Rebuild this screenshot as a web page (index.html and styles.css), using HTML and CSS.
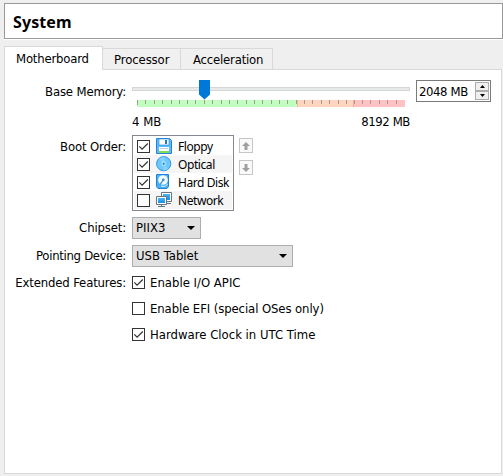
FILE: index.html
```html
<!DOCTYPE html>
<html lang="en">
<head>
<meta charset="utf-8">
<title>System</title>
<link rel="stylesheet" href="styles.css">
</head>
<body>
<svg class="defs" width="0" height="0">
  <defs>
    <linearGradient id="blue" x1="0" y1="0" x2="0" y2="1"><stop offset="0" stop-color="#48b4f5"/><stop offset="1" stop-color="#1490ea"/></linearGradient>
    <symbol id="tick" viewBox="0 0 13 13"><path d="M2.3 6.4 5.1 9.2 10.8 3.5" fill="none" stroke="#333" stroke-width="1.2"/></symbol>
  </defs>
</svg>
<header class="title"><h1>System</h1></header>
<nav class="tabs">
  <div class="tab active">Motherboard</div>
  <div class="tab proc">Processor</div>
  <div class="tab accel">Acceleration</div>
</nav>
<main class="panel">
  <section class="row memory">
    <label class="name">Base Memory:</label>
    <div class="slider">
      <div class="track"><div class="groove"></div>
        <svg class="handle" width="11" height="20" viewBox="0 0 11 20"><path d="M0 0H11V14.5L5.5 19.5 0 14.5Z" fill="#0078d7"/></svg>
      </div>
      <svg class="scale" width="268" height="7" viewBox="0 0 268 7" shape-rendering="crispEdges">
        <path d="M0 0H160V7H0Z" fill="#c1ffc1"/><path d="M160 0H216V7H160Z" fill="#ffd5c0"/><path d="M216 0H268V7H216Z" fill="#ffc1c1"/>
        <path d="M160.5 0V7" stroke="#dfc598"/><path d="M216.5 0V7" stroke="#f0aaa0"/>
        <path d="M.5 0v5M8.5 0v4M17.5 0v4M25.5 0v4M34.5 0v4M42.5 0v4M50.5 0v4M58.5 0v4M67.5 0v4M75.5 0v4M84.5 0v4M92.5 0v4M100.5 0v4M109.5 0v4M117.5 0v4M125.5 0v4M134.5 0v4M142.5 0v4M150.5 0v4M159.5 0v4M167.5 0v4M175.5 0v4M184.5 0v4M192.5 0v4M201.5 0v4M209.5 0v4M217.5 0v4M225.5 0v4M233.5 0v4M242.5 0v4M250.5 0v4M259.5 0v4" stroke="#a09c92"/>
      </svg>
      <div class="limits"><span>4 MB</span><span class="tight">8192 MB</span></div>
    </div>
    <div class="spin"><span class="tight">2048 MB</span>
      <div class="steps">
        <i><svg width="5" height="3"><path d="M0 3 2.5 0 5 3Z"/></svg></i>
        <i><svg width="5" height="3"><path d="M0 0H5L2.5 3Z"/></svg></i>
      </div>
    </div>
  </section>
  <section class="row boot">
    <label class="name">Boot Order:</label>
    <ul class="list">
      <li><span class="check"><svg><use href="#tick"/></svg></span>
        <svg class="icon" viewBox="0 0 16 16"><path d="M.5.5H13.5L15.5 2.5V15.5H.5Z" fill="#5cbcfa" stroke="#2385dc"/><path d="M3 1H13V7H3Z" fill="#fff" stroke="#2385dc" stroke-width=".6"/><path d="M9 2h2v4H9Z" fill="#2678be"/><path d="M3 9H13V15H3Z" fill="#fff"/><path d="M4 10.5H12" stroke="#c5d1d9"/><path d="M3 13H13V15H3Z" fill="#86dc4a"/></svg>
        <span>Floppy</span></li>
      <li><span class="check"><svg><use href="#tick"/></svg></span>
        <svg class="icon" viewBox="0 0 16 16"><circle cx="7.7" cy="7.7" r="7.1" fill="#6cc8fb" stroke="#2e93e4"/><path d="M8 8 3 2.5A7 7 0 0 1 9 1ZM8 8 12.5 13A7 7 0 0 1 7 14.500Z" fill="#a3e6ff" opacity=".4"/><circle cx="7.7" cy="7.7" r="2.4" fill="#a6e2fd"/><circle cx="7.7" cy="7.7" r="1" fill="#176fae"/></svg>
        <span>Optical</span></li>
      <li><span class="check"><svg><use href="#tick"/></svg></span>
        <svg class="icon" viewBox="0 0 16 16"><path d="M.5.5H12.5V12.5L11 14.5H2L.5 12.5Z" fill="#4ab0f6" stroke="#1f82d8"/><circle cx="7" cy="6" r="4.8" fill="#f0faff"/><circle cx="7.3" cy="5.7" r="1.3" fill="#3a86c0"/><path d="M7 6.500 4 10.500" stroke="#2f7fbd" stroke-width="1.2"/><path d="M5 12Q9.500 13.500 11.500 10" fill="none" stroke="#d5f0ff"/></svg>
        <span>Hard Disk</span></li>
      <li><span class="check"></span>
        <svg class="icon" viewBox="0 0 16 16"><path d="M5.5.5H15.5V9.500H5.5Z" fill="#fff" stroke="#68757e"/><path d="M7 2H14V8H7Z" fill="url(#blue)"/><path d="M11 11.500H15" fill="none" stroke="#68757e"/><path d="M.5 4.5H10.5V12.5H.5Z" fill="#fff" stroke="#68757e"/><path d="M2 6H9V11H2Z" fill="url(#blue)"/><path d="M5.5 13V14M2 14.5H9" stroke="#68757e"/></svg>
        <span>Network</span></li>
    </ul>
    <div class="moves">
      <i><svg width="8" height="8"><path d="M4 0 8 4H5.5V8H2.5V4H0Z"/></svg></i>
      <i><svg width="8" height="8"><path d="M4 8 8 4H5.5V0H2.5V4H0Z"/></svg></i>
    </div>
  </section>
  <section class="row combo-row">
    <label class="name">Chipset:</label>
    <div class="combo small"><span>PIIX3</span><svg width="8" height="4"><path d="M0 0H8L4 4Z"/></svg></div>
  </section>
  <section class="row combo-row">
    <label class="name pointing">Pointing Device:</label>
    <div class="combo wide"><span>USB Tablet</span><svg width="8" height="4"><path d="M0 0H8L4 4Z"/></svg></div>
  </section>
  <section class="row features">
    <label class="name">Extended Features:</label>
    <div class="options">
      <div><span class="check"><svg><use href="#tick"/></svg></span><span>Enable I/O APIC</span></div>
      <div><span class="check"></span><span class="efi">Enable EFI (special OSes only)</span></div>
      <div><span class="check"><svg><use href="#tick"/></svg></span><span>Hardware Clock in UTC Time</span></div>
    </div>
  </section>
</main>
</body>
</html>
```
FILE: styles.css
```css
* { box-sizing: border-box; }
body { margin: 0; padding: 3px 0 0 4px; height: 476px; overflow: hidden; background: #efefef; color: #000; font: 13px/16px "DejaVu Sans Condensed", "DejaVu Sans", sans-serif; font-stretch: condensed; white-space: nowrap; }
.defs { position: absolute; }
.title { height: 36px; width: 499px; border: 1px solid #999; background: #fff; padding: 8px 8px 0; box-shadow: 0 1px #fff; }
h1 { margin: 0; font: bold 16px/21px "Noto Sans", sans-serif; letter-spacing: .1px; }
.tabs { display: flex; align-items: flex-end; width: 498px; height: 31px; padding-top: 7px; letter-spacing: -.2px; }
.tabs::after { content: ""; flex: 1; border-bottom: 1px solid #d9d9d9; }
.tab { height: 22px; border: 1px solid #d9d9d9; border-left: 0; background: #f0f0f0; padding: 3px 0 0 11px; }
.tab.active { width: 99px; height: 24px; background: #fff; border-left: 1px solid #d9d9d9; border-bottom: 0; padding-top: 4px; }
.proc { width: 78px; letter-spacing: -.1px; }
.accel { width: 92px; padding-left: 12px; }
.panel { width: 498px; height: 404px; border: 1px solid #d9d9d9; border-top: 0; background: #fff; padding-top: 10px; }
.row { display: flex; }
.name { width: 121px; margin-right: 6px; text-align: right; letter-spacing: -.15px; }
.pointing { letter-spacing: -.3px; }
.memory { height: 55px; }
.memory .name { padding-top: 4px; }
.slider { width: 278px; margin-right: 6px; }
.track { position: relative; height: 20px; padding-top: 7px; }
.groove { height: 4px; border: 1px solid #d6d6d6; background: #e7eaea; }
.handle { position: absolute; left: 67px; top: 0; }
.scale { display: block; margin-left: 5px; }
.limits { display: flex; justify-content: space-between; margin-top: 7px; }
.tight { letter-spacing: -.4px; }
.spin { display: flex; justify-content: space-between; width: 75px; height: 22px; border: 1px solid #7a7a7a; padding: 1px 1px 1px 2px; }
.spin > span { padding-top: 2px; }
.steps { width: 14px; }
.steps i { display: flex; height: 9px; border: 1px solid #acacac; background: #f0f0f0; align-items: center; justify-content: center; }
.boot { height: 82px; }
.boot .name { padding-top: 4px; }
.list { list-style: none; margin: 0; padding: 1px; width: 102px; height: 76px; border: 1px solid #828790; font: 12px/18px "Noto Sans", sans-serif; letter-spacing: -.42px; }
.list li { display: flex; align-items: center; height: 18px; padding-left: 3px; }
.list li:nth-child(even) { background: #f5f5f5; }
.list li span:last-child { padding-top: 1px; }
.check { width: 13px; height: 13px; border: 1px solid #333; background: #fff; flex: none; }
.check svg { display: block; width: 13px; height: 13px; margin: -1px; }
.icon { width: 16px; height: 16px; margin: 0 6px; flex: none; }
.moves { margin-left: 5px; padding-top: 3px; }
.moves i { display: flex; align-items: center; justify-content: center; width: 14px; height: 15px; margin-bottom: 7px; border: 1px solid #c6c6c6; background: #fafafa; fill: #a0a0a0; }
.combo-row { height: 28px; }
.combo-row .name { padding-top: 3px; }
.combo { display: flex; align-items: center; justify-content: space-between; height: 22px; border: 1px solid #adadad; background: #e1e1e1; padding: 0 5px 0 3px; }
.small { width: 69px; }
.wide { width: 161px; }
.features .name { padding-top: 2px; }
.options { padding-top: 2px; }
.options div { display: flex; align-items: center; height: 16px; gap: 5px; margin-bottom: 10px; }
.options .check { margin-bottom: 1px; }
.efi { letter-spacing: -.1px; }
```
